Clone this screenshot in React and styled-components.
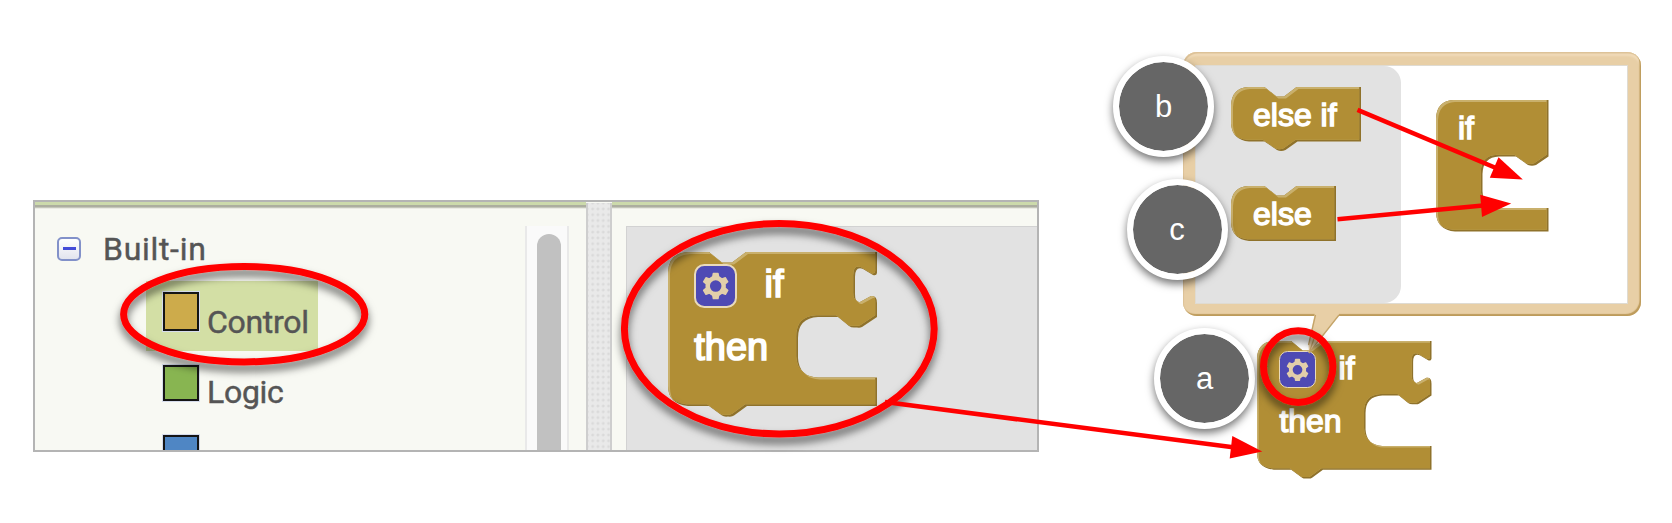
import React, { useId } from 'react';
import styled, { createGlobalStyle, css } from 'styled-components';

const GlobalStyle = createGlobalStyle`
  * { box-sizing: border-box; }
  body { margin: 0; background: #fff; overflow: hidden; }
`;

const Page = styled.main`
  position: relative;
  display: flex;
  align-items: flex-start;
  width: 1672px;
  height: 523px;
  background: #fff;
  overflow: hidden;
`;

/* ---------- editor panel ---------- */

const Panel = styled.section`
  flex: none;
  display: flex;
  width: 1006px;
  height: 252px;
  margin: 200px 0 0 33px;
  border: 2px solid #b4b4b4;
  background: #f8f9f3;
  overflow: hidden;
`;

const topStrip = css`
  border-top: 3px solid #ccdaab;
  box-shadow: inset 0 2.5px 0 #acae9f, inset 0 3.5px 0 #dcded4;
`;

const Palette = styled.nav`
  ${topStrip}
  display: flex;
  width: 551px;
  padding-left: 22px;
`;

const Tree = styled.div`
  width: 468px;
  font-family: Roboto, sans-serif;
  font-size: 32px;
  line-height: 38px;
  color: #555;
`;

const TreeHead = styled.div`
  display: flex;
  align-items: center;
  gap: 22px;
  height: 76px;
  padding: 24px 0 13px;
`;

const TreeLabel = styled.span`
  letter-spacing: ${(p) => p.$tracking || 0}px;
  -webkit-text-stroke: 0.45px #555;
`;

const Toggle = styled.span`
  display: flex;
  align-items: center;
  justify-content: center;
  width: 24px;
  height: 24px;
  border: 2.5px solid #8291c9;
  border-radius: 5px;
  background: linear-gradient(#fff, #e2e4ee);
  &::after {
    content: '';
    width: 13px;
    height: 3px;
    background: #444bd8;
  }
`;

const Category = styled.div`
  display: flex;
  align-items: flex-start;
  gap: 8px;
  width: 172px;
  height: 70px;
  margin-left: 89px;
  padding: 11px 0 0 17px;
  background: ${(p) => (p.$selected ? '#d3dfa5' : 'transparent')};
`;

const CategoryName = styled(TreeLabel)`
  padding-top: 11px;
`;

const Swatch = styled.span`
  flex: none;
  width: 36px;
  height: ${(p) => (p.$selected ? 39 : 36)}px;
  border: 2.5px solid #151515;
  outline: 1.5px solid #d6dcec;
  background: ${(p) => p.$color};
  transform: ${(p) => (p.$selected ? 'none' : 'translateY(3px)')};
`;

const ScrollTrack = styled.div`
  width: 44px;
  margin-top: 21px;
  padding: 8px 8px 0 10px;
  border: solid #e9e9e9;
  border-width: 0 2px;
  background: #fafafa;
`;

const ScrollThumb = styled.div`
  width: 24px;
  height: 240px;
  border-radius: 12px;
  background: #c1c1c1;
`;

const Splitter = styled.div`
  width: 26px;
  margin-top: 1px;
  border: solid #cecece;
  border-width: 0 2.5px;
  background: radial-gradient(circle, #dadada 1px, transparent 1.8px) 2px 3px / 5.3px 5.8px, #e9e9e9;
`;

const Viewer = styled.div`
  ${topStrip}
  flex: 1;
  padding: 21px 0 0 14px;
`;

const Workspace = styled.div`
  height: 100%;
  padding: 25px 0 0 41px;
  border: solid #d2d2d2;
  border-width: 1px 0 0 1px;
  background: #e2e2e2;
`;

/* ---------- blocks ---------- */

const BlockBox = styled.div`
  position: relative;
  flex: none;
  width: ${(p) => p.$w}px;
  height: ${(p) => p.$h}px;
  font-family: 'Liberation Sans', sans-serif;
  font-size: ${(p) => p.$size || 32}px;
  line-height: 1;
  color: #fff;
  -webkit-text-stroke: 0.045em #fff;
  white-space: pre;
`;

const Shape = styled.svg`
  position: absolute;
  inset: 0;
  width: 100%;
  height: 100%;
  overflow: visible;
`;

const BlockFields = styled.div`
  position: relative;
  padding: ${(p) => p.$pad};
`;

const FieldRow = styled.div`
  display: flex;
  align-items: flex-start;
  gap: 0.72em;
  height: 1.67em;
  margin-left: -0.01em;
`;

const GearButton = styled.span`
  display: flex;
  align-items: center;
  justify-content: center;
  flex: none;
  width: 1.14em;
  height: 1.16em;
  margin-top: -0.02em;
  border: 0.055em solid #e9dabb;
  border-radius: 0.27em;
  background: #4e4ab4;
`;

const GearIcon = styled.svg`
  width: 0.72em;
  height: 0.74em;
`;

const teeth = [0, 60, 120, 180, 240, 300];

function Gear() {
  return (
    <GearButton>
      <GearIcon viewBox="-14 -14 28 28" fill="#e2cfaa">
        {teeth.map((a) => (
          <path key={a} transform={`rotate(${a})`} d="M-4 -8 L-3.1 -13 Q-3 -13.6 -2.4 -13.6 H2.4 Q3 -13.6 3.1 -13 L4 -8Z" />
        ))}
        <circle r="8.2" fill="none" stroke="#e2cfaa" strokeWidth="4.6" />
      </GearIcon>
    </GearButton>
  );
}

const OUTLINES = {
  ifThen:
    'M20 0H41L54 10.5H64L78 0H209V21Q208.500 24 205 23L195 17Q187 14 187 25V42Q187 51 192 50L203 44Q209 43 209 51V65L194 75Q192 76 189 75.500H186Q183 75.500 181 74L170 65H150Q130 66 130 86V106Q131 125 150 125.500H209V154H79L66 163.500Q64 165 60 164.500Q56 165 54 163.500L41 154H20Q0 152 0 134V20Q1 1 20 0Z',
  elseIf: 'M17 0H33.500L45.500 9.500H53L65.500 0H130V54.500H66.500L54.500 63Q50 65 46 63L33.500 54.500H18Q1 53 0 36.500V18Q1 1 17 0Z',
  elseOnly: 'M17 0H33.500L45.500 9.500H53L65.500 0H105V55H18Q1 53 0 37V18Q1 1 17 0Z',
  ifSlot:
    'M17 0H112.500V56.500L100 65Q96 66.500 92 65L80 56.500H63Q47 57 46.500 74V91Q47 107.500 63 108H112.500V131.500H19Q1 130 0 113V18Q1 1 17 0Z',
};

function Block({ outline, w, h, size, viewBox, pad, children }) {
  const id = useId().replace(/[^a-zA-Z0-9]/g, '');
  const d = OUTLINES[outline];
  return (
    <BlockBox $w={w} $h={h} $size={size}>
      <Shape viewBox={viewBox || `0 0 ${w} ${h}`}>
        <clipPath id={`${id}a`}>
          <path d={d} />
        </clipPath>
        <clipPath id={`${id}b`}>
          <path d={d} transform="translate(-1.8 -1.8)" />
        </clipPath>
        <path d={d} fill="#8f722b" />
        <g clipPath={`url(#${id}a)`}>
          <path d={d} transform="translate(-1.8 -1.8)" fill="#c9b06c" />
          <g clipPath={`url(#${id}b)`}>
            <path d={d} transform="translate(2 2)" fill="#b18e35" />
          </g>
        </g>
      </Shape>
      <BlockFields $pad={pad}>{children}</BlockFields>
    </BlockBox>
  );
}

function IfThenBlock({ w, h, size }) {
  return (
    <Block outline="ifThen" w={w} h={h} size={size} viewBox="0 0 209 165" pad="0.34em 0 0 0.69em">
      <FieldRow>
        <Gear />
        <span>if</span>
      </FieldRow>
      <div>then</div>
    </Block>
  );
}

/* ---------- mutator diagram ---------- */

const Diagram = styled.section`
  position: relative;
  flex: 1;
  height: 523px;
`;

const Placed = styled.div`
  position: absolute;
  left: ${(p) => p.$x}px;
  top: ${(p) => p.$y}px;
`;

const Bubble = styled.div`
  display: flex;
  width: 458px;
  height: 264px;
  padding: 14px 14px 13.500px 13px;
  border-radius: 14px;
  background: #e8cfa6;
  box-shadow: inset -1.5px -2px 1px #bd9b5b, inset 1px 1.5px 1px #dcc196, inset 0 4px 2px #f1dbb9;
`;

const BubbleBody = styled.div`
  display: flex;
  flex: 1;
  background: #fff;
  box-shadow: 0 0 0 1px #dfdbd2;
`;

const Flyout = styled.div`
  display: flex;
  flex-direction: column;
  gap: 35px;
  width: 205px;
  padding: 21px 0 0 35px;
  border-radius: 0 17px 17px 0;
  background: #e2e2e2;
`;

const MutatorArea = styled.div`
  padding: 34px 0 0 35px;
`;

const Tail = styled.svg`
  display: block;
  overflow: visible;
`;

const Marker = styled.div`
  display: flex;
  align-items: center;
  justify-content: center;
  width: 101px;
  height: 101px;
  border: 6px solid #fff;
  border-radius: 50%;
  background: #666;
  background-clip: padding-box;
  box-shadow: 0 4px 9px rgba(0, 0, 0, 0.55);
  font: 31px/1 'Liberation Sans', sans-serif;
  color: #fff;
`;

/* ---------- annotations ---------- */

const Annotations = styled.svg`
  position: absolute;
  inset: 0;
  pointer-events: none;
`;

function Arrow({ line, head }) {
  return (
    <>
      <path d={line} stroke="#f00" strokeWidth="4.6" fill="none" />
      <path d={head} fill="#f00" />
    </>
  );
}

const rings = [
  { cx: 244.2, cy: 314.2, rx: 120.6, ry: 47.7 },
  { cx: 779.3, cy: 328.7, rx: 154.9, ry: 105.2 },
  { cx: 1298.2, cy: 366.6, rx: 34.7, ry: 35.8 },
];

const markers = [
  { label: 'b', x: 74, y: 56 },
  { label: 'c', x: 87.5, y: 179 },
  { label: 'a', x: 115, y: 328 },
];

const categories = [
  { name: 'Control', color: '#cdab4b', selected: true },
  { name: 'Logic', color: '#88b551' },
  { name: '', color: '#4f86c4' },
];

export default function App() {
  return (
    <Page>
      <GlobalStyle />
      <Panel>
        <Palette>
          <Tree>
            <TreeHead>
              <Toggle />
              <TreeLabel $tracking={0.7}>Built-in</TreeLabel>
            </TreeHead>
            {categories.map((c) => (
              <Category key={c.color} $selected={c.selected}>
                <Swatch $color={c.color} $selected={c.selected} />
                <CategoryName $tracking={-0.3}>{c.name}</CategoryName>
              </Category>
            ))}
          </Tree>
          <ScrollTrack>
            <ScrollThumb />
          </ScrollTrack>
        </Palette>
        <Splitter />
        <Viewer>
          <Workspace>
            <IfThenBlock w={209} h={165} size={38} />
          </Workspace>
        </Viewer>
      </Panel>

      <Diagram>
        <Placed $x={144} $y={52}>
          <Bubble>
            <BubbleBody>
              <Flyout>
                <Block outline="elseIf" w={130} h={64} pad="12px 0 0 22px">
                  else if
                </Block>
                <Block outline="elseOnly" w={105} h={55} pad="12px 0 0 22px">
                  else
                </Block>
              </Flyout>
              <MutatorArea>
                <Block outline="ifSlot" w={113} h={132} pad="12px 0 0 22px">
                  if
                </Block>
              </MutatorArea>
            </BubbleBody>
          </Bubble>
        </Placed>
        <Placed $x={218.3} $y={341}>
          <IfThenBlock w={174.5} h={138} size={32} />
        </Placed>
        <Placed $x={268} $y={312}>
          <Tail width="36" height="42">
            <path d="M8 0L1.500 33L2 41L32 3V0Z" fill="#e8cfa6" />
            <path d="M8.500 3L1.500 33M32 3L2 41L9 21" fill="none" stroke="#c4a469" strokeWidth="1.300" />
          </Tail>
        </Placed>
        {markers.map((m) => (
          <Placed key={m.label} $x={m.x} $y={m.y}>
            <Marker>{m.label}</Marker>
          </Placed>
        ))}
      </Diagram>

      <Annotations width="1672" height="523">
        <defs>
          <filter id="ringShadow" x="-20%" y="-30%" width="140%" height="170%">
            <feDropShadow dx="0" dy="6" stdDeviation="4.5" floodColor="#000" floodOpacity="0.6" />
          </filter>
        </defs>
        {rings.map((r) => (
          <ellipse key={r.cx} {...r} fill="none" stroke="#f00" strokeWidth="7" filter="url(#ringShadow)" />
        ))}
        <Arrow line="M885 402L1233 447.300" head="M1232.300 436L1262.300 451.500L1229.700 458.500Z" />
        <Arrow line="M1357.500 109.800L1496 168" head="M1498.500 157.300L1522.800 179.400L1489.800 177.800Z" />
        <Arrow line="M1337.500 219.200L1483 205.500" head="M1480.200 194.800L1511.200 203.400L1482 217Z" />
      </Annotations>
    </Page>
  );
}
